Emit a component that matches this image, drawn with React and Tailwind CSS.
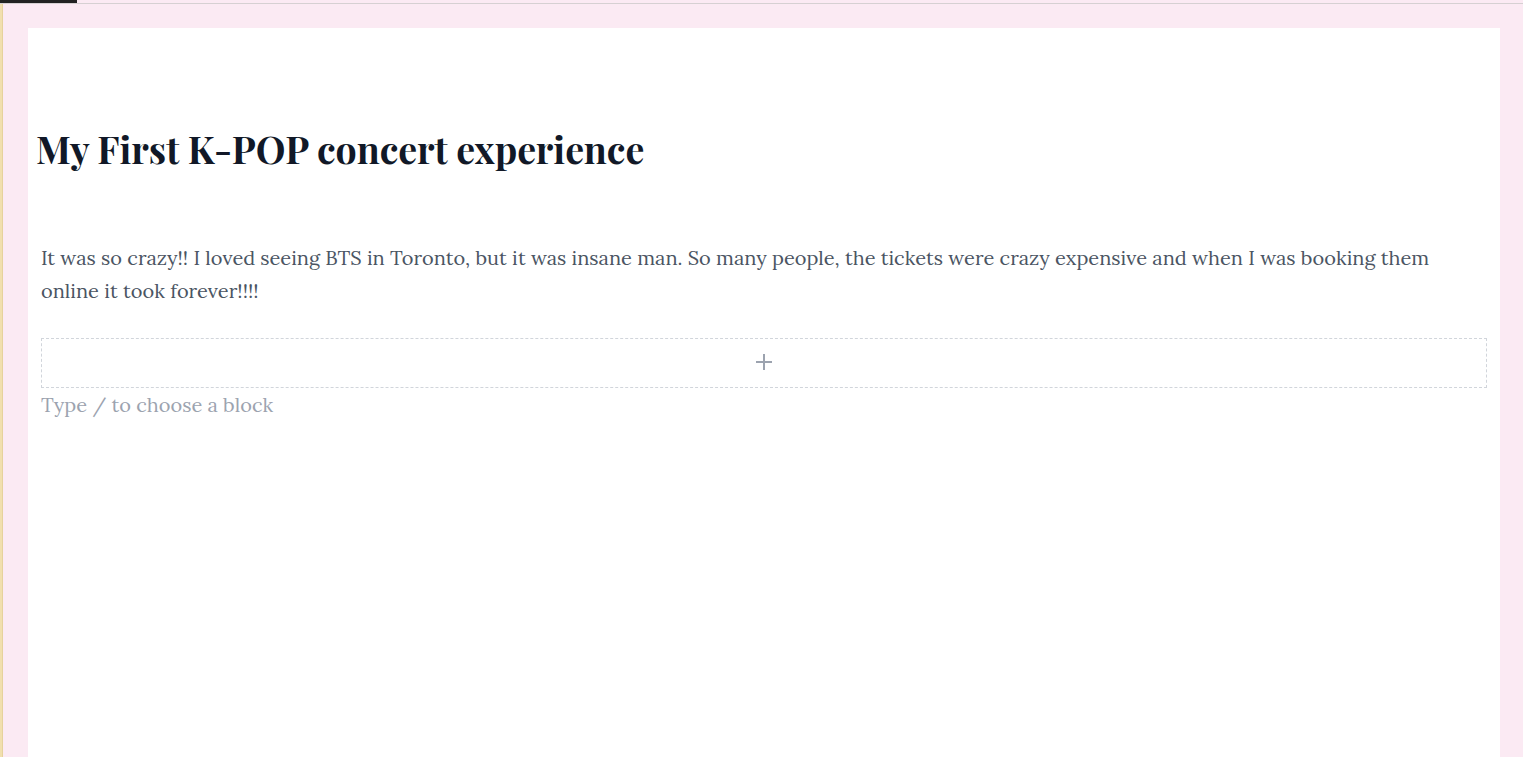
export default function App() {
  return (
    <div className="min-h-screen bg-[#fbeaf3] flex flex-col">
      <div className="flex h-[4px] border-b border-[#d6d0d2]">
        <div className="w-[77px] h-[3px] bg-[#222222]" />
      </div>
      <div className="flex flex-1">
        <div className="w-[3px] bg-[#f1dfae] border-r border-[#e6d29c]" />
        <div className="flex-1 pl-[25px] pr-[23px] pt-[24px]">
          <div className="bg-white min-h-[729px] px-[13px] pt-[97px]">
            <h1
              className="-ml-[5px] text-[37.5px] leading-[46px] font-bold text-[#111827]"
              style={{ fontFamily: '"Playfair Display", "Liberation Serif", serif' }}
            >
              My First K-POP concert experience
            </h1>
            <div style={{ fontFamily: 'Lora, "Liberation Serif", serif' }}>
              <p className="mt-[70px] text-[20px] leading-[33px] text-[#4b5563]">
                It was so crazy!! I loved seeing BTS in Toronto, but it was insane man. So many people, the tickets were crazy expensive and when I was booking them online it took forever!!!!
              </p>
              <div className="mt-[31px] h-[50px] border border-dashed border-[#d1d5db] flex items-center justify-center">
                <svg width="20" height="20" viewBox="0 0 20 20" className="mt-[-2px]">
                  <path d="M10 2v16M2 10h16" stroke="#9ca3af" strokeWidth="2" fill="none" />
                </svg>
              </div>
              <p className="mt-0 text-[20px] leading-[33px] text-[#9ca3af]">
                Type / to choose a block
              </p>
            </div>
          </div>
        </div>
      </div>
    </div>
  );
}
